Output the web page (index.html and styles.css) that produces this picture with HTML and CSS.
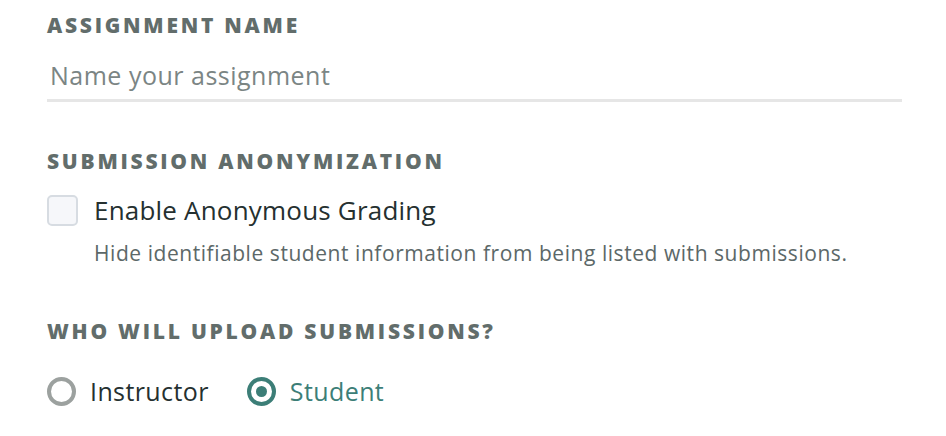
FILE: index.html
```html
<!DOCTYPE html>
<html>
<head>
<meta charset="utf-8">
<link rel="stylesheet" href="styles.css">
</head>
<body>
<div class="form">
  <section class="field">
    <h2 class="label">Assignment Name</h2>
    <input class="text-input" type="text" placeholder="Name your assignment">
  </section>
  <section class="field">
    <h2 class="label">Submission Anonymization</h2>
    <div class="check-row">
      <span class="checkbox"></span>
      <div class="check-text">
        <div class="check-title">Enable Anonymous Grading</div>
        <div class="check-desc">Hide identifiable student information from being listed with submissions.</div>
      </div>
    </div>
  </section>
  <section class="field">
    <h2 class="label">Who will upload submissions?</h2>
    <div class="radios">
      <label class="radio"><span class="circle"></span><span class="radio-text">Instructor</span></label>
      <label class="radio selected"><span class="circle"></span><span class="radio-text">Student</span></label>
    </div>
  </section>
</div>
</body>
</html>
```
FILE: styles.css
```css
html, body {
  margin: 0;
  padding: 0;
  background: #ffffff;
}
body {
  font-family: "Open Sans", "Noto Sans", sans-serif;
  color: #283232;
}
.form {
  padding: 12px 44px 0 47px;
}
.label {
  margin: 0;
  font-size: 21px;
  font-weight: 800;
  letter-spacing: 2.75px;
  text-transform: uppercase;
  color: #626d6b;
  line-height: 26px;
}
.text-input {
  display: block;
  box-sizing: border-box;
  width: 855px;
  margin: 22px 0 46px;
  padding: 0 0 9px 3px;
  border: none;
  border-bottom: 3px solid #e6e6e6;
  outline: none;
  font-family: inherit;
  font-size: 25px;
  letter-spacing: 0.5px;
  line-height: 30px;
  color: #283232;
  background: transparent;
}
.text-input::placeholder {
  color: #7b8584;
}
.check-row {
  display: flex;
  gap: 16px;
  margin-top: 21px;
  margin-bottom: 53px;
}
.checkbox {
  flex: none;
  width: 31px;
  height: 31px;
  box-sizing: border-box;
  border: 2px solid #d7dce2;
  border-radius: 5px;
  background: #f6f7fa;
}
.check-title {
  font-size: 26px;
  letter-spacing: 0.2px;
  line-height: 30px;
  color: #253030;
}
.check-desc {
  font-size: 21px;
  letter-spacing: 0.55px;
  line-height: 24px;
  color: #5c6868;
  margin-top: 16px;
}
.radios {
  display: flex;
  gap: 38px;
  margin-top: 32px;
}
.radio {
  display: flex;
  align-items: center;
  gap: 14px;
}
.circle {
  flex: none;
  width: 29px;
  height: 29px;
  box-sizing: border-box;
  border: 4px solid #9ca19f;
  border-radius: 50%;
  position: relative;
}
.radio-text {
  font-size: 25px;
  letter-spacing: 0.4px;
  line-height: 30px;
  color: #253030;
}
.radio.selected .circle {
  border-color: #3c7e77;
}
.radio.selected .circle::after {
  content: "";
  position: absolute;
  left: 50%;
  top: 50%;
  width: 11px;
  height: 11px;
  margin: -5.5px 0 0 -5.5px;
  border-radius: 50%;
  background: #3c7e77;
}
.radio.selected .radio-text {
  color: #3c7e77;
}
```
